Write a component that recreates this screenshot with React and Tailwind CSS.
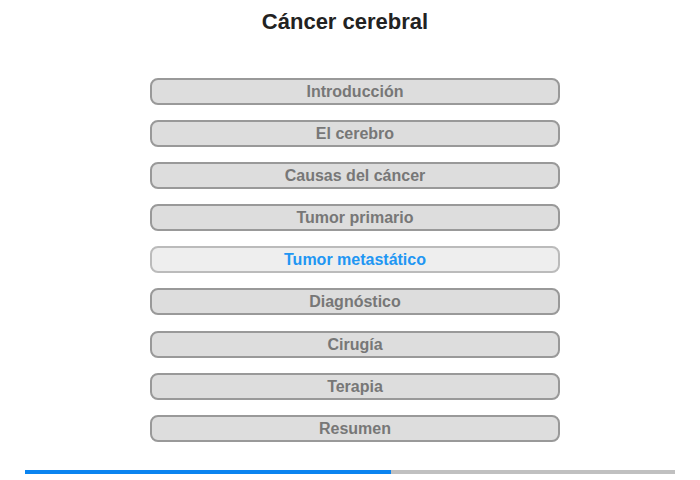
const items = [
  'Introducción',
  'El cerebro',
  'Causas del cáncer',
  'Tumor primario',
  'Tumor metastático',
  'Diagnóstico',
  'Cirugía',
  'Terapia',
  'Resumen',
];

const active = 4;

export default function App() {
  return (
    <div className="w-[700px] h-[480px] bg-white flex flex-col items-center font-['Liberation_Sans',Arial,sans-serif]">
      {/* Title */}
      <h1 className="mt-[8px] pr-[10px] h-[28px] leading-[28px] text-[22px] font-bold text-[#222]">
        Cáncer cerebral
      </h1>

      {/* Chapter menu */}
      <div className="mt-[42px] ml-[10px] flex flex-col gap-[15.1px]">
        {items.map((label, i) => (
          <button
            key={label}
            className={
              i === active
                ? 'w-[410px] h-[27px] rounded-[8px] border-2 border-[#bbb] bg-[#eee] text-[16px] font-bold text-[#2196f3]'
                : 'w-[410px] h-[27px] rounded-[8px] border-2 border-[#999] bg-[#ddd] text-[16px] font-bold text-[#777]'
            }
          >
            {label}
          </button>
        ))}
      </div>

      {/* Progress */}
      <div className="mt-[28px] w-[650px] h-[4px] bg-[#c0c0c0] flex">
        <div className="w-[366px] h-full bg-[#0a84f0]" />
      </div>
    </div>
  );
}
